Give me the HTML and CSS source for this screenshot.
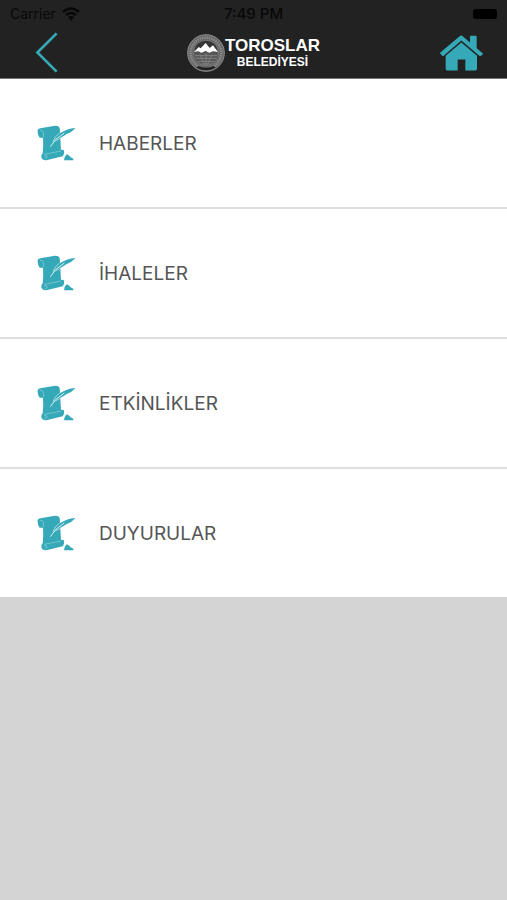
FILE: index.html
```html
<!DOCTYPE html>
<html lang="tr">
<head>
    <meta charset="UTF-8">
    <meta name="viewport" content="width=device-width, initial-scale=1.0">
    <title>Toroslar Belediyesi</title>
    <link rel="stylesheet" href="styles.css">
</head>
<body>
    <!-- Scroll icon shared by all menu rows -->
    <svg class="sprite" aria-hidden="true">
        <symbol id="scroll" viewBox="36 30 114 111">
            <path fill="#36a9b8" d="M38 50 Q36 42 46 40 L90 32 Q101 31 104 39 L105 50 L106 70 L108 104 L116 105 Q120 114 113 124 L64 136 Q52 137 49 127 Q48 119 53 115 Q56 95 54 68 L44 68 Q38 60 38 50Z"/>
            <path fill="none" stroke="#8fd0d8" stroke-width="2" d="M45 46 Q53 44 55 52 L56 66 M58 118 L108 108 M57 123 Q66 119 67 126 Q66 131 59 130"/>
            <path fill="#36a9b8" d="M84 84 Q88 64 107 53 Q127 41 151 39 Q140 52 124 58 Q108 70 90 78Z"/>
            <path fill="none" stroke="#d8f0f3" stroke-width="2" d="M84 80 Q89 64 104 54 M90 78 Q103 73 112 65"/>
            <path fill="none" stroke="#d8f0f3" stroke-width="3" d="M76 95 Q88 72 118 54"/>
            <path fill="#36a9b8" d="M117 136 L119 126 L125 118 L131 121 L137 127 L145 131 L145 136Z"/>
        </symbol>
    </svg>

    <header class="header">
        <div class="status-bar">
            <div class="carrier">
                <span>Carrier</span>
                <svg class="wifi" viewBox="0 0 18 14" aria-hidden="true">
                    <path d="M1 5 Q9 -2 17 5 M4 8 Q9 4 14 8" fill="none" stroke="#080808" stroke-width="2.5"/>
                    <path d="M6 10 Q9 8 12 10 L9 14Z" fill="#080808"/>
                </svg>
            </div>
            <span class="time">7:49 PM</span>
            <span class="battery"></span>
        </div>
        <nav class="navbar">
            <button class="back" type="button" aria-label="Geri">
                <svg viewBox="106 96 68 122" aria-hidden="true">
                    <path d="M170 100 L113 157 L170 214" fill="none" stroke="#36a9b8" stroke-width="8"/>
                </svg>
            </button>
            <div class="logo">
                <svg class="emblem" viewBox="0 0 114 114" aria-hidden="true">
                    <circle cx="57" cy="57" r="55" fill="#686868" stroke="#8c8c8c" stroke-width="3"/>
                    <circle cx="57" cy="57" r="46" fill="none" stroke="#8e8e8e" stroke-width="7" stroke-dasharray="4 3"/>
                    <circle cx="57" cy="57" r="38" fill="#565656" stroke="#848484" stroke-width="2"/>
                    <path d="M22 53 Q25 22 57 20 Q89 22 92 53Z" fill="#343434"/>
                    <path d="M21 54 L35 39 L41 43 L56 27 L68 42 L78 34 L93 54 L78 52 L67 56 L56 51 L43 56 L34 52Z" fill="#fff"/>
                    <path d="M24 65 H90 M27 73 H87 M33 82 H81 M40 90 H74 M39 62 L53 92 M57 58 V94 M75 62 L61 92" fill="none" stroke="#828282" stroke-width="3"/>
                    <path d="M28 101 Q57 116 86 101 L80 96 Q57 105 34 96Z" fill="#222"/>
                </svg>
                <div class="logo-text">
                    <span class="logo-name">TOROSLAR</span>
                    <span class="logo-sub">BELEDİYESİ</span>
                </div>
            </div>
            <a class="home" href="#" aria-label="Ana Sayfa">
                <svg viewBox="308 104 129 107" aria-hidden="true">
                    <path fill="#36a9b8" d="M372 105 Q374 105 377 108 L398 126 V109 Q398 106 401 106 H415 Q418 106 418 109 V143 L436 158 Q438 160 435 163 L431 166 Q428 168 425 165 L372 120 L320 165 Q317 168 314 165 L309 160 Q307 158 310 155 L366 108 Q369 105 372 105Z"/>
                    <path fill="#36a9b8" d="M372 126 L419 166 V205 Q419 210 414 210 H384 V177 H361 V210 H330 Q325 210 325 205 V166Z"/>
                </svg>
            </a>
        </nav>
    </header>

    <main>
        <ul class="menu">
            <li>
                <a href="#"><svg class="icon" aria-hidden="true"><use href="#scroll"/></svg>HABERLER</a>
            </li>
            <li>
                <a href="#"><svg class="icon" aria-hidden="true"><use href="#scroll"/></svg>İHALELER</a>
            </li>
            <li>
                <a href="#"><svg class="icon" aria-hidden="true"><use href="#scroll"/></svg>ETKİNLİKLER</a>
            </li>
            <li>
                <a href="#"><svg class="icon" aria-hidden="true"><use href="#scroll"/></svg>DUYURULAR</a>
            </li>
        </ul>
    </main>
</body>
</html>
```
FILE: styles.css
```css
* {
    box-sizing: border-box;
}

body {
    margin: 0;
    background-color: #d4d4d4;
    font-family: Inter, "Liberation Sans", sans-serif;
}

svg {
    display: block;
}

.sprite {
    display: none;
}

/* Header: status bar on top of the navbar */
.header {
    background-color: #222;
    border-bottom: 1px solid #777;
}

.status-bar {
    display: grid;
    grid-template-columns: 1fr auto 1fr;
    align-items: center;
    height: 27px;
    padding: 0 10px;
    color: #080808;
    font-size: 14px;
}

.carrier {
    display: flex;
    align-items: center;
    gap: 6px;
}

.wifi {
    width: 18px;
    height: 14px;
}

.time {
    font-size: 15px;
    font-weight: 500;
}

.battery {
    justify-self: end;
    width: 24px;
    height: 10px;
    border-radius: 3px;
    background-color: #000;
}

/* Navbar */
.navbar {
    display: grid;
    grid-template-columns: 1fr auto 1fr;
    align-items: center;
    height: 51px;
    padding: 0 24px;
}

.back {
    justify-self: start;
    padding: 0 11px;
    border: none;
    background: none;
    cursor: pointer;
}

.back svg {
    width: 23px;
    height: 41px;
}

.home {
    justify-self: end;
}

.home svg {
    width: 43px;
    height: 36px;
}

/* Logo */
.logo {
    display: flex;
    align-items: center;
    color: #fff;
    font-family: "Liberation Sans", sans-serif;
    font-weight: bold;
}

.emblem {
    width: 38px;
    height: 38px;
}

.logo-text {
    display: flex;
    flex-direction: column;
    align-items: center;
}

.logo-name {
    font-size: 17px;
    line-height: 18px;
}

.logo-sub {
    font-size: 12px;
    line-height: 14px;
}

/* Menu list */
.menu {
    margin: 0;
    padding: 0;
    list-style: none;
    background-color: #fff;
}

.menu li + li {
    border-top: 2px solid #dedede;
}

.menu a {
    display: flex;
    align-items: center;
    gap: 24px;
    height: 128px;
    padding: 0 37px;
    color: #555;
    font-size: 19px;
    text-decoration: none;
}

.icon {
    width: 38px;
    height: 37px;
}
```
